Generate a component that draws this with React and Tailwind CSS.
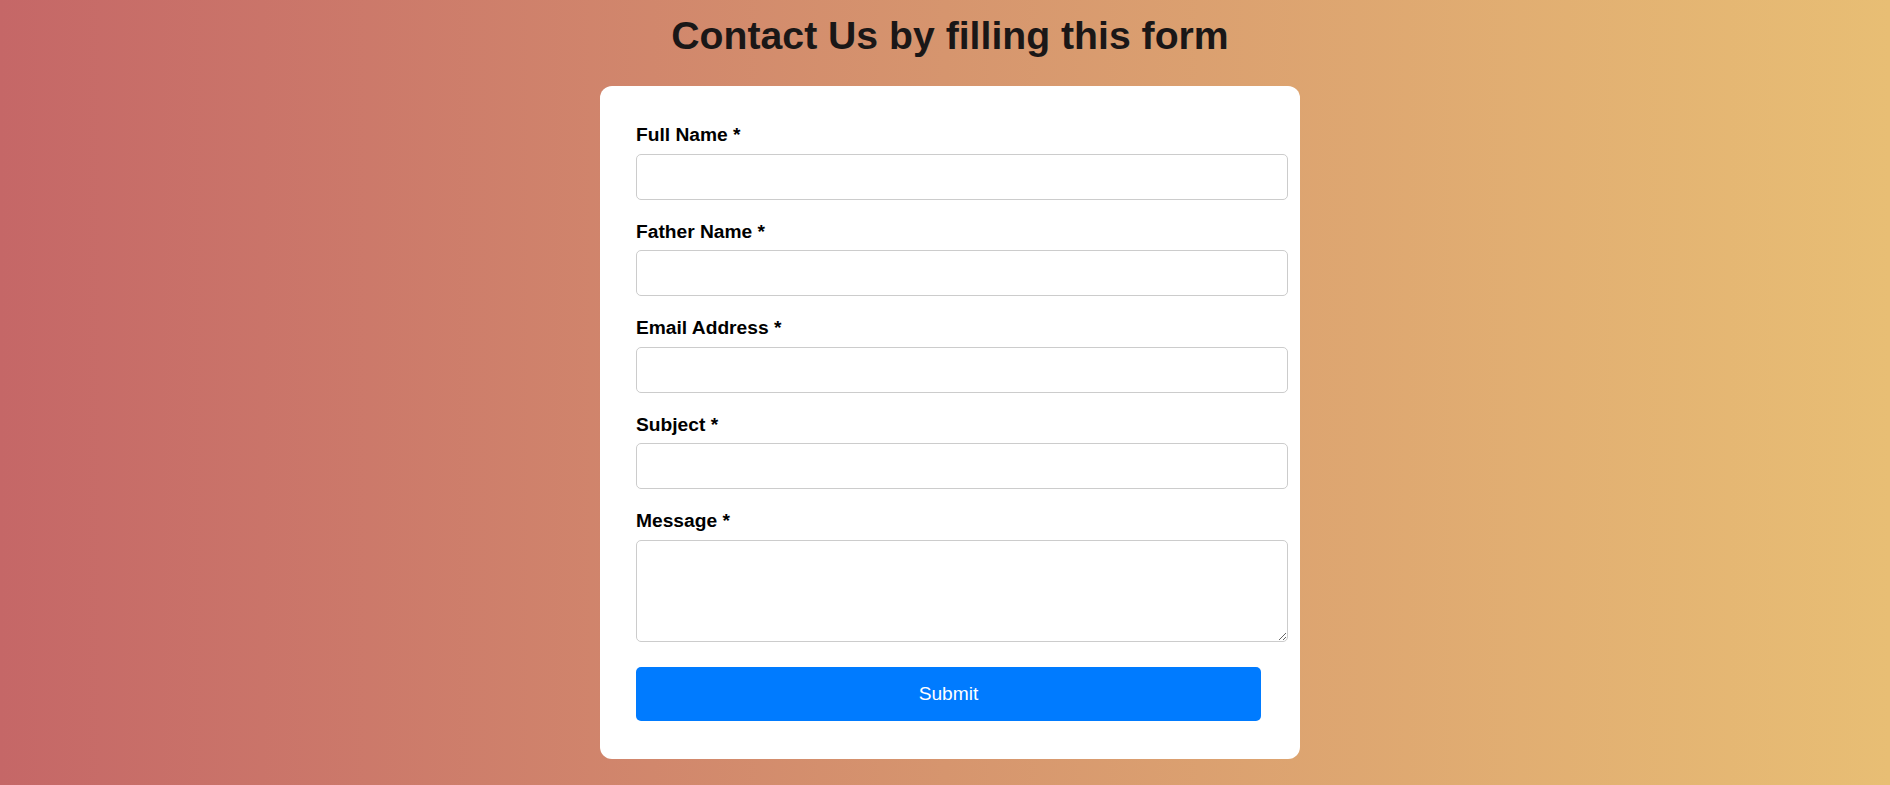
import { useState } from "react"

const fields = [
  { name: "fullName", label: "Full Name *", type: "text" },
  { name: "fatherName", label: "Father Name *", type: "text" },
  { name: "email", label: "Email Address *", type: "email" },
  { name: "subject", label: "Subject *", type: "text" },
]

export default function App() {
  const [form, setForm] = useState({ fullName: "", fatherName: "", email: "", subject: "", message: "" })

  const update = (e) => setForm({ ...form, [e.target.name]: e.target.value })

  return (
    <div
      className="min-h-[785px] w-full bg-gradient-to-r from-[#c56767] via-[#d6956e] to-[#e8be74] pl-[10px] flex flex-col items-center"
      style={{ fontFamily: '"Liberation Sans", Arial, sans-serif' }}
    >
      <h1 className="mt-[14px] text-[39.2px] leading-[44px] font-bold text-[#1a1717]">
        Contact Us by filling this form
      </h1>

      <form
        onSubmit={(e) => e.preventDefault()}
        className="mt-[28px] w-[700px] bg-white rounded-[12px] pt-[38px] pb-[38px] pl-[36px] pr-[36px]"
      >
        {fields.map((f) => (
          <div key={f.name} className="mb-[21px]">
            <label className="block text-[19.2px] leading-[22px] font-bold text-black mb-[7.6px]">{f.label}</label>
            <input
              name={f.name}
              type={f.type}
              value={form[f.name]}
              onChange={update}
              required
              className="block w-[652px] h-[46px] rounded-[5px] border border-[#cccccc] px-3 text-[19.2px] outline-none"
            />
          </div>
        ))}

        <div>
          <label className="block text-[19.2px] leading-[22px] font-bold text-black mb-[7.6px]">Message *</label>
          <textarea
            name="message"
            value={form.message}
            onChange={update}
            required
            className="block w-[652px] h-[102px] rounded-[5px] border border-[#cccccc] px-3 py-2 text-[19.2px] outline-none resize-y"
          />
        </div>

        <button
          type="submit"
          className="mt-[25px] w-[625px] h-[54px] rounded-[5px] bg-[#007bff] text-white text-[19.2px] leading-[22px]"
        >
          Submit
        </button>
      </form>
    </div>
  )
}
